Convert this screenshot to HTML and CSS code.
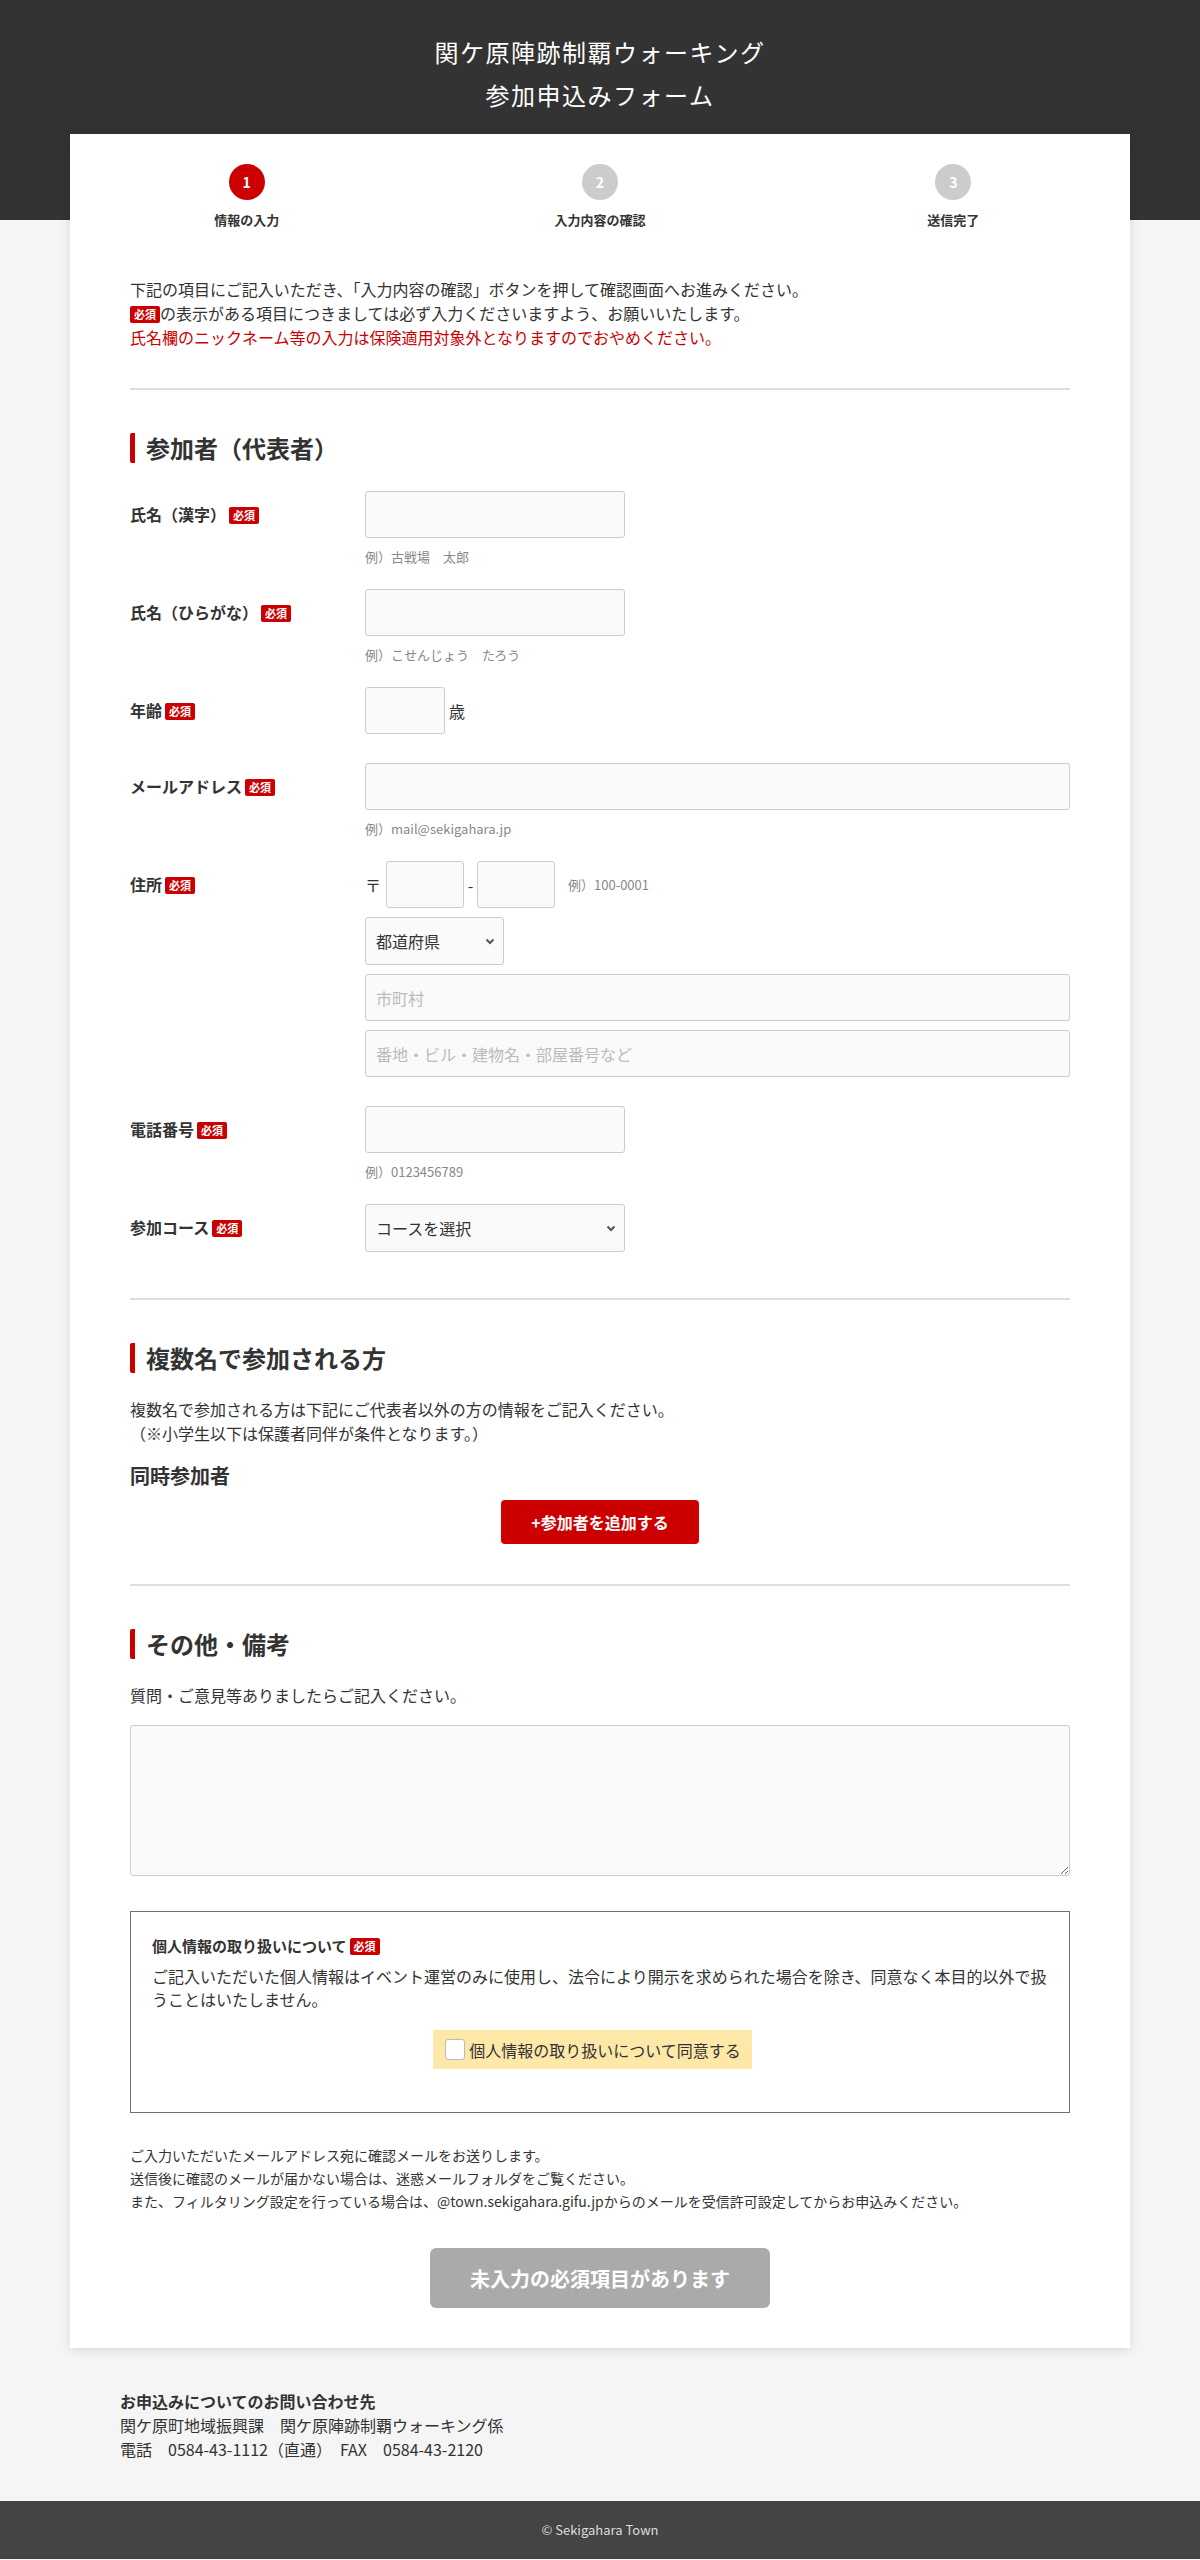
FILE: index.html
```html
<!DOCTYPE html>
<html lang="ja">
<head>
  <meta charset="utf-8">
  <title>関ケ原陣跡制覇ウォーキング 参加申込みフォーム</title>
  <link rel="stylesheet" href="styles.css">
</head>
<body>
  <header class="site-header">
    <h1>関ケ原陣跡制覇ウォーキング<br>参加申込みフォーム</h1>
  </header>

  <main class="card">
    <ol class="steps">
      <li class="step current"><span class="num">1</span><span class="step-name">情報の入力</span></li>
      <li class="step"><span class="num">2</span><span class="step-name">入力内容の確認</span></li>
      <li class="step"><span class="num">3</span><span class="step-name">送信完了</span></li>
    </ol>

    <div class="inner">
      <div class="intro">
        <p>下記の項目にご記入いただき、「入力内容の確認」ボタンを押して確認画面へお進みください。</p>
        <p><span class="req">必須</span>の表示がある項目につきましては必ず入力くださいますよう、お願いいたします。</p>
        <p class="warn">氏名欄のニックネーム等の入力は保険適用対象外となりますのでおやめください。</p>
      </div>

      <section class="section form-sec">
        <h2 class="sec-title">参加者（代表者）</h2>

        <div class="row">
          <div class="row-label">氏名（漢字）<span class="req">必須</span></div>
          <div class="row-field">
            <input class="input w-md" type="text">
            <p class="hint">例）古戦場　太郎</p>
          </div>
        </div>

        <div class="row">
          <div class="row-label">氏名（ひらがな）<span class="req">必須</span></div>
          <div class="row-field">
            <input class="input w-md" type="text">
            <p class="hint">例）こせんじょう　たろう</p>
          </div>
        </div>

        <div class="row">
          <div class="row-label">年齢<span class="req">必須</span></div>
          <div class="row-field inline">
            <input class="input w-sm" type="text"><span class="unit">歳</span>
          </div>
        </div>

        <div class="row">
          <div class="row-label">メールアドレス<span class="req">必須</span></div>
          <div class="row-field">
            <input class="input w-full" type="text">
            <p class="hint">例）mail@sekigahara.jp</p>
          </div>
        </div>

        <div class="row">
          <div class="row-label">住所<span class="req">必須</span></div>
          <div class="row-field stack">
            <div class="inline">
              <span class="zip-mark">〒</span>
              <input class="input w-zip" type="text">
              <span class="dash">-</span>
              <input class="input w-zip" type="text">
              <span class="hint zip-hint">例）100-0001</span>
            </div>
            <div class="select-wrap w-pref">
              <select class="input select">
                <option>都道府県</option>
              </select>
              <svg class="chev" width="10" height="7" viewBox="0 0 10 7"><path d="M1.5 1.5 5 5 8.5 1.5" fill="none" stroke="#555" stroke-width="2"/></svg>
            </div>
            <input class="input w-full" type="text" placeholder="市町村">
            <input class="input w-full" type="text" placeholder="番地・ビル・建物名・部屋番号など">
          </div>
        </div>

        <div class="row">
          <div class="row-label">電話番号<span class="req">必須</span></div>
          <div class="row-field">
            <input class="input w-md" type="text">
            <p class="hint">例）0123456789</p>
          </div>
        </div>

        <div class="row">
          <div class="row-label">参加コース<span class="req">必須</span></div>
          <div class="row-field">
            <div class="select-wrap w-md">
              <select class="input select">
                <option>コースを選択</option>
              </select>
              <svg class="chev" width="10" height="7" viewBox="0 0 10 7"><path d="M1.5 1.5 5 5 8.5 1.5" fill="none" stroke="#555" stroke-width="2"/></svg>
            </div>
          </div>
        </div>
      </section>

      <section class="section">
        <h2 class="sec-title">複数名で参加される方</h2>
        <p class="lead">複数名で参加される方は下記にご代表者以外の方の情報をご記入ください。<br>（※小学生以下は保護者同伴が条件となります。）</p>
        <h3 class="sub-title">同時参加者</h3>
        <div class="center">
          <button class="btn-add" type="button">+参加者を追加する</button>
        </div>
      </section>

      <section class="section last">
        <h2 class="sec-title">その他・備考</h2>
        <p class="lead">質問・ご意見等ありましたらご記入ください。</p>
        <textarea class="input textarea"></textarea>

        <div class="privacy">
          <h4>個人情報の取り扱いについて<span class="req">必須</span></h4>
          <p>ご記入いただいた個人情報はイベント運営のみに使用し、法令により開示を求められた場合を除き、同意なく本目的以外で扱うことはいたしません。</p>
          <div class="center">
            <label class="agree"><input type="checkbox">個人情報の取り扱いについて同意する</label>
          </div>
        </div>

        <div class="notes">
          <p>ご入力いただいたメールアドレス宛に確認メールをお送りします。</p>
          <p>送信後に確認のメールが届かない場合は、迷惑メールフォルダをご覧ください。</p>
          <p>また、フィルタリング設定を行っている場合は、@town.sekigahara.gifu.jpからのメールを受信許可設定してからお申込みください。</p>
        </div>

        <div class="center">
          <button class="btn-submit" type="button" disabled>未入力の必須項目があります</button>
        </div>
      </section>
    </div>
  </main>

  <div class="contact">
    <p class="contact-title">お申込みについてのお問い合わせ先</p>
    <p>関ケ原町地域振興課　関ケ原陣跡制覇ウォーキング係</p>
    <p>電話　0584-43-1112（直通）　FAX　0584-43-2120</p>
  </div>

  <footer class="site-footer">© Sekigahara Town</footer>
</body>
</html>
```

FILE: styles.css
```css
* {
  box-sizing: border-box;
}

body {
  margin: 0;
  background: #f5f5f5;
  color: #333;
  font-family: "Noto Sans CJK JP", "Noto Sans", sans-serif;
  font-size: 16px;
  line-height: 1.5;
}

p {
  margin: 0;
}

.site-header {
  background: #333;
  height: 220px;
  padding-top: 30px;
}

.site-header h1 {
  margin: 0;
  color: #fff;
  text-align: center;
  font-size: 24px;
  font-weight: 400;
  line-height: 43px;
  letter-spacing: 1.5px;
}

.card {
  display: block;
  width: 1060px;
  margin: -86px auto 0;
  background: #fff;
  box-shadow: 0 2px 10px rgba(0, 0, 0, 0.12);
  padding: 30px 0 40px;
}

/* steps */
.steps {
  display: flex;
  list-style: none;
  margin: 0;
  padding: 0;
}

.step {
  flex: 1;
  display: flex;
  flex-direction: column;
  align-items: center;
}

.step .num {
  width: 36px;
  height: 36px;
  border-radius: 50%;
  background: #ccc;
  color: #fff;
  font-size: 14px;
  font-weight: bold;
  line-height: 36px;
  text-align: center;
}

.step.current .num {
  background: #cc0000;
}

.step-name {
  margin-top: 11px;
  font-size: 13px;
  font-weight: bold;
  line-height: 18px;
}

.inner {
  padding: 0 60px;
}

.intro {
  margin-top: 48px;
  padding-bottom: 39px;
}

.warn {
  color: #cc0000;
}

.req {
  display: inline-block;
  vertical-align: middle;
  margin: -3px 0 0 3px;
  padding: 2px 4px;
  background: #cc0000;
  color: #fff;
  font-size: 11px;
  font-weight: bold;
  line-height: 13px;
  border-radius: 2px;
}

.intro .req {
  margin-left: 0;
}

/* sections */
.section {
  border-top: 2px solid #ddd;
  padding: 43px 0 40px;
}

.section.form-sec {
  padding-bottom: 17px;
}

.section.last {
  padding-bottom: 0;
}

.sec-title {
  margin: 0 0 28px;
  border-left: 5px solid #cc0000;
  border-radius: 2px;
  padding-left: 11px;
  font-size: 24px;
  line-height: 30px;
}

.row {
  display: flex;
  margin-bottom: 29px;
}

.row-label {
  width: 235px;
  flex-shrink: 0;
  padding-top: 11px;
  font-weight: bold;
  line-height: 24px;
}

.row-field {
  flex: 1;
}

.inline {
  display: flex;
  align-items: center;
}

.stack {
  display: flex;
  flex-direction: column;
  gap: 9px;
}

.input {
  display: block;
  height: 47px;
  border: 1px solid #ccc;
  border-radius: 3px;
  background: #fafafa;
  padding: 0 10px;
  font: inherit;
  color: #333;
}

.input::placeholder {
  color: #bbb;
}

.w-md { width: 260px; }
.w-sm { width: 80px; }
.w-full { width: 100%; }
.w-zip { width: 78px; }
.w-pref { width: 139px; }

.hint {
  margin: 9px 0 -7px;
  color: #888;
  font-size: 13px;
  line-height: 20px;
}

.unit {
  margin-left: 4px;
}

.zip-mark {
  width: 21px;
}

.dash {
  width: 13px;
  text-align: center;
}

.zip-hint {
  margin: 0 0 0 13px;
}

.select-wrap {
  position: relative;
}

.select {
  width: 100%;
  height: 48px;
  appearance: none;
  -webkit-appearance: none;
}

.chev {
  position: absolute;
  right: 9px;
  top: 21px;
}

.lead {
  margin-top: -4px;
}

.sub-title {
  margin: 16px 0 9px;
  font-size: 20px;
  line-height: 30px;
}

.center {
  display: flex;
  justify-content: center;
}

.btn-add {
  width: 198px;
  height: 44px;
  border: none;
  border-radius: 4px;
  background: #cc0000;
  color: #fff;
  font: bold 16px "Noto Sans CJK JP", sans-serif;
}

.textarea {
  width: 100%;
  height: 151px;
  margin-top: 18px;
  padding: 10px;
  resize: vertical;
}

.privacy {
  margin-top: 35px;
  border: 1px solid #707070;
  padding: 22px 21px 43px;
}

.privacy h4 {
  margin: 0;
  font-size: 15px;
  line-height: 24px;
}

.privacy p {
  margin-top: 7px;
  line-height: 23px;
}

.privacy .center {
  margin-top: 19px;
}

.agree {
  display: flex;
  align-items: center;
  height: 39px;
  margin-right: 15px;
  padding: 0 11px 0 12px;
  background: #fee8a8;
}

.agree input {
  appearance: none;
  -webkit-appearance: none;
  width: 20px;
  height: 21px;
  margin: 0 4px 0 0;
  border: 1px solid #bbb;
  border-radius: 3px;
  background: #fff;
}

.notes {
  margin-top: 31px;
  font-size: 14px;
  line-height: 23px;
}

.notes + .center {
  margin-top: 35px;
}

.btn-submit {
  width: 340px;
  height: 60px;
  border: none;
  border-radius: 6px;
  background: #aaa;
  color: #fff;
  font: bold 20px "Noto Sans CJK JP", sans-serif;
}

/* bottom */
.contact {
  width: 960px;
  margin: 0 auto;
  padding: 41px 0 40px;
}

.contact-title {
  font-weight: bold;
}

.site-footer {
  background: #444;
  color: #ddd;
  text-align: center;
  font-size: 13px;
  line-height: 58px;
}
```
